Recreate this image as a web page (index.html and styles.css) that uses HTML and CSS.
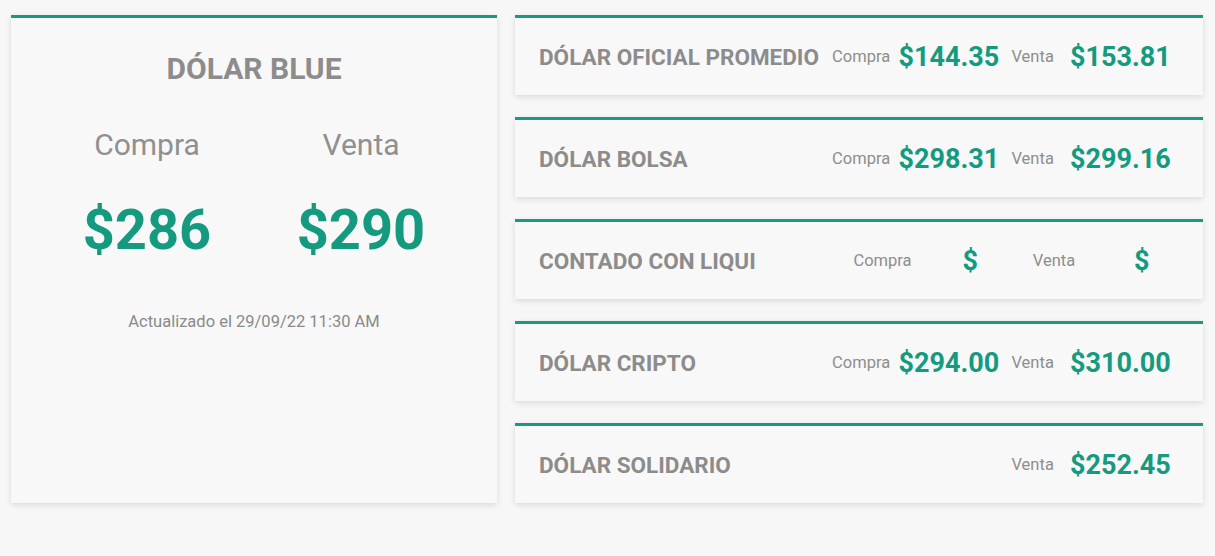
FILE: index.html
```html
<!DOCTYPE html>
<html lang="es">
<head>
    <meta charset="UTF-8">
    <meta name="viewport" content="width=device-width, initial-scale=1.0">
    <title>Cotizaciones del dólar</title>
    <link rel="stylesheet" href="styles.css">
</head>
<body>
    <main class="cotizaciones">
        <section class="tarjeta principal">
            <h1 class="titulo-blue">DÓLAR BLUE</h1>
            <div class="precios">
                <span class="etiqueta-grande">Compra</span>
                <span class="etiqueta-grande">Venta</span>
                <span class="valor-grande">$286</span>
                <span class="valor-grande">$290</span>
            </div>
            <p class="actualizado">Actualizado el 29/09/22 11:30 AM</p>
        </section>

        <div class="lista">
            <section class="tarjeta fila">
                <h2 class="nombre">DÓLAR OFICIAL PROMEDIO</h2>
                <div class="valores">
                    <span class="etiqueta">Compra</span>
                    <span class="valor">$144.35</span>
                    <span class="etiqueta venta">Venta</span>
                    <span class="valor ultimo">$153.81</span>
                </div>
            </section>
            <section class="tarjeta fila">
                <h2 class="nombre">DÓLAR BOLSA</h2>
                <div class="valores">
                    <span class="etiqueta">Compra</span>
                    <span class="valor">$298.31</span>
                    <span class="etiqueta venta">Venta</span>
                    <span class="valor ultimo">$299.16</span>
                </div>
            </section>
            <section class="tarjeta fila">
                <h2 class="nombre">CONTADO CON LIQUI</h2>
                <div class="valores">
                    <span class="etiqueta">Compra</span>
                    <span class="valor">$</span>
                    <span class="etiqueta venta">Venta</span>
                    <span class="valor ultimo">$</span>
                </div>
            </section>
            <section class="tarjeta fila">
                <h2 class="nombre">DÓLAR CRIPTO</h2>
                <div class="valores">
                    <span class="etiqueta">Compra</span>
                    <span class="valor">$294.00</span>
                    <span class="etiqueta venta">Venta</span>
                    <span class="valor ultimo">$310.00</span>
                </div>
            </section>
            <section class="tarjeta fila">
                <h2 class="nombre">DÓLAR SOLIDARIO</h2>
                <div class="valores">
                    <!-- sin precio de compra: se ocultan para mantener la alineacion -->
                    <span class="etiqueta oculto">Compra</span>
                    <span class="valor oculto">$000.00</span>
                    <span class="etiqueta venta">Venta</span>
                    <span class="valor ultimo">$252.45</span>
                </div>
            </section>
        </div>
    </main>
</body>
</html>
```

FILE: styles.css
```css
* {
    margin: 0;
    padding: 0;
    box-sizing: border-box;
}

html, body {
    min-height: 100%;
}

body {
    background-color: #f7f7f7;
    font-family: Roboto, "Liberation Sans", sans-serif;
    color: #8c8c8c;
    padding-bottom: 40px;
}

.cotizaciones {
    display: grid;
    grid-template-columns: 486px 688px;
    gap: 18px;
    padding: 15px 12px 0 11px;
}

.tarjeta {
    background-color: #f8f8f8;
    border-top: 3px solid #1b9880;
    box-shadow: 0 2px 6px rgba(0, 0, 0, 0.12);
}

.principal {
    display: flex;
    flex-direction: column;
    align-items: center;
    padding-top: 33px;
}

.titulo-blue {
    font-size: 30px;
    font-weight: 700;
    color: #8c8c8c;
    line-height: 36px;
}

.precios {
    display: grid;
    grid-template-columns: 214px 214px;
    justify-items: center;
    margin-top: 40px;
}

.etiqueta-grande {
    font-size: 30px;
    line-height: 36px;
    color: #909090;
}

.valor-grande {
    font-size: 56px;
    font-weight: 700;
    line-height: 66px;
    color: #149a7e;
    margin-top: 34px;
}

.actualizado {
    font-size: 16.5px;
    line-height: 19px;
    margin-top: 49px;
    color: #8a8a8a;
}

.lista {
    display: flex;
    flex-direction: column;
    gap: 22px;
}

.fila {
    display: flex;
    align-items: center;
    justify-content: space-between;
    height: 80px;
    padding: 0 28px 0 24px;
}

.nombre {
    font-size: 22.5px;
    font-weight: 700;
    color: #8c8c8c;
    white-space: nowrap;
}

.valores {
    display: flex;
    align-items: center;
    justify-content: space-around;
    width: 347px;
}

.etiqueta {
    font-size: 16.5px;
    color: #8e8e8e;
}

.valor {
    font-size: 27px;
    font-weight: 700;
    color: #149a7e;
}

.venta {
    margin-left: 4px;
}

.ultimo {
    margin-left: 8px;
}

.oculto {
    visibility: hidden;
}
```
